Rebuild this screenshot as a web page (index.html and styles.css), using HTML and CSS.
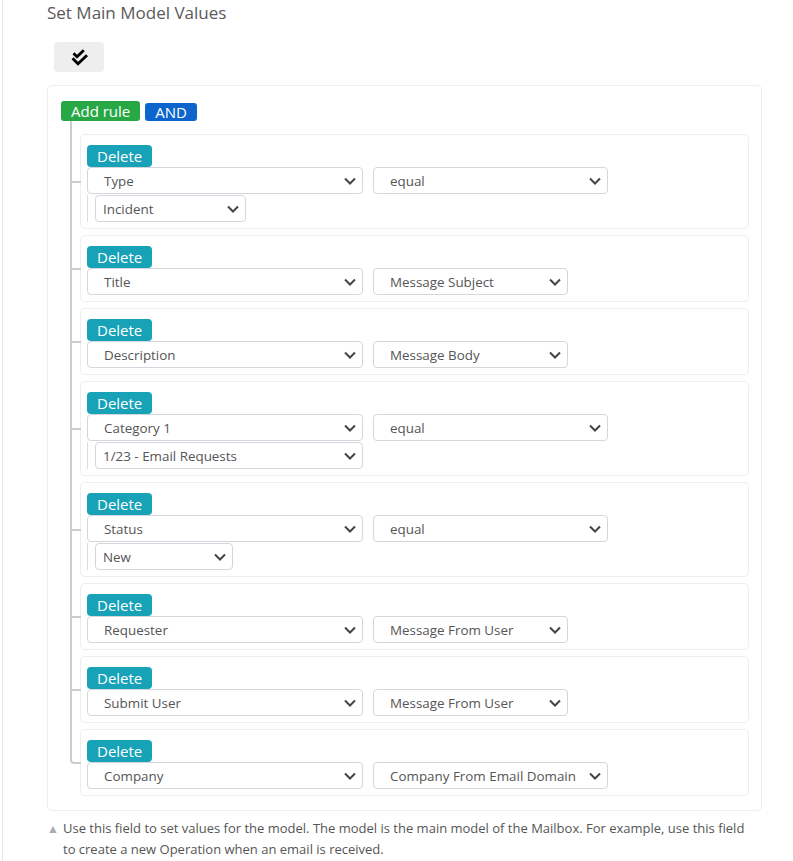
FILE: index.html
```html
<!DOCTYPE html>
<html lang="en">
<head>
    <meta charset="UTF-8">
    <meta name="viewport" content="width=device-width, initial-scale=1.0">
    <title>Set Main Model Values</title>
    <link rel="stylesheet" href="styles.css">
</head>
<body>
    <div class="panel">
        <h3 class="field-title">Set Main Model Values</h3>

        <button type="button" class="toggle-btn" title="Validate">
            <svg width="17" height="17" viewBox="0 0 17 17">
                <path d="M2.5 4.2L6 7.7 12.8 1.2M1.5 9.2l5.5 5.6 9-8.6" fill="none" stroke="#000" stroke-width="2.8"/>
            </svg>
        </button>

        <div class="query-builder">
            <div class="group-header">
                <button type="button" class="btn btn-add">Add rule</button>
                <button type="button" class="btn btn-and">AND</button>
            </div>

            <ul class="rules-list">
                <li class="rule">
                    <button type="button" class="btn btn-delete">Delete</button>
                    <div class="rule-fields">
                        <div class="select sel-field"><span>Type</span><svg class="chevron" width="12" height="8" viewBox="0 0 12 8"><path d="M1 1.5l5 5 5-5" /></svg></div>
                        <div class="select sel-op"><span>equal</span><svg class="chevron" width="12" height="8" viewBox="0 0 12 8"><path d="M1 1.5l5 5 5-5" /></svg></div>
                    </div>
                    <div class="rule-value">
                        <div class="select sel-short"><span>Incident</span><svg class="chevron" width="12" height="8" viewBox="0 0 12 8"><path d="M1 1.5l5 5 5-5" /></svg></div>
                    </div>
                </li>
                <li class="rule">
                    <button type="button" class="btn btn-delete">Delete</button>
                    <div class="rule-fields">
                        <div class="select sel-field"><span>Title</span><svg class="chevron" width="12" height="8" viewBox="0 0 12 8"><path d="M1 1.5l5 5 5-5" /></svg></div>
                        <div class="select sel-val"><span>Message Subject</span><svg class="chevron" width="12" height="8" viewBox="0 0 12 8"><path d="M1 1.5l5 5 5-5" /></svg></div>
                    </div>
                </li>
                <li class="rule">
                    <button type="button" class="btn btn-delete">Delete</button>
                    <div class="rule-fields">
                        <div class="select sel-field"><span>Description</span><svg class="chevron" width="12" height="8" viewBox="0 0 12 8"><path d="M1 1.5l5 5 5-5" /></svg></div>
                        <div class="select sel-val"><span>Message Body</span><svg class="chevron" width="12" height="8" viewBox="0 0 12 8"><path d="M1 1.5l5 5 5-5" /></svg></div>
                    </div>
                </li>
                <li class="rule">
                    <button type="button" class="btn btn-delete">Delete</button>
                    <div class="rule-fields">
                        <div class="select sel-field"><span>Category 1</span><svg class="chevron" width="12" height="8" viewBox="0 0 12 8"><path d="M1 1.5l5 5 5-5" /></svg></div>
                        <div class="select sel-op"><span>equal</span><svg class="chevron" width="12" height="8" viewBox="0 0 12 8"><path d="M1 1.5l5 5 5-5" /></svg></div>
                    </div>
                    <div class="rule-value">
                        <div class="select sel-wide"><span>1/23 - Email Requests</span><svg class="chevron" width="12" height="8" viewBox="0 0 12 8"><path d="M1 1.5l5 5 5-5" /></svg></div>
                    </div>
                </li>
                <li class="rule">
                    <button type="button" class="btn btn-delete">Delete</button>
                    <div class="rule-fields">
                        <div class="select sel-field"><span>Status</span><svg class="chevron" width="12" height="8" viewBox="0 0 12 8"><path d="M1 1.5l5 5 5-5" /></svg></div>
                        <div class="select sel-op"><span>equal</span><svg class="chevron" width="12" height="8" viewBox="0 0 12 8"><path d="M1 1.5l5 5 5-5" /></svg></div>
                    </div>
                    <div class="rule-value">
                        <div class="select sel-tiny"><span>New</span><svg class="chevron" width="12" height="8" viewBox="0 0 12 8"><path d="M1 1.5l5 5 5-5" /></svg></div>
                    </div>
                </li>
                <li class="rule">
                    <button type="button" class="btn btn-delete">Delete</button>
                    <div class="rule-fields">
                        <div class="select sel-field"><span>Requester</span><svg class="chevron" width="12" height="8" viewBox="0 0 12 8"><path d="M1 1.5l5 5 5-5" /></svg></div>
                        <div class="select sel-val"><span>Message From User</span><svg class="chevron" width="12" height="8" viewBox="0 0 12 8"><path d="M1 1.5l5 5 5-5" /></svg></div>
                    </div>
                </li>
                <li class="rule">
                    <button type="button" class="btn btn-delete">Delete</button>
                    <div class="rule-fields">
                        <div class="select sel-field"><span>Submit User</span><svg class="chevron" width="12" height="8" viewBox="0 0 12 8"><path d="M1 1.5l5 5 5-5" /></svg></div>
                        <div class="select sel-val"><span>Message From User</span><svg class="chevron" width="12" height="8" viewBox="0 0 12 8"><path d="M1 1.5l5 5 5-5" /></svg></div>
                    </div>
                </li>
                <li class="rule">
                    <button type="button" class="btn btn-delete">Delete</button>
                    <div class="rule-fields">
                        <div class="select sel-field"><span>Company</span><svg class="chevron" width="12" height="8" viewBox="0 0 12 8"><path d="M1 1.5l5 5 5-5" /></svg></div>
                        <div class="select sel-op"><span>Company From Email Domain</span><svg class="chevron" width="12" height="8" viewBox="0 0 12 8"><path d="M1 1.5l5 5 5-5" /></svg></div>
                    </div>
                </li>
            </ul>
        </div>

        <div class="help-text">
            <span class="help-icon">&#9650;</span>
            <p>Use this field to set values for the model. The model is the main model of the Mailbox. For example, use this field to create a new Operation when an email is received.</p>
        </div>
    </div>
</body>
</html>
```

FILE: styles.css
```css
body {
    margin: 0;
    font-family: "Open Sans", "Noto Sans", sans-serif;
    color: #555;
    background-color: #fff;
}
.panel {
    margin-left: 2px;
    min-height: 100vh;
    border-left: 1px solid #e6e6e6;
    padding: 0 31px 0 44px;
    box-sizing: border-box;
}
.field-title {
    margin: 0;
    padding-top: 1px;
    font-size: 17px;
    font-weight: normal;
    line-height: 24px;
    color: #5a5a5a;
}
.toggle-btn {
    display: flex;
    align-items: center;
    justify-content: center;
    width: 50px;
    height: 30px;
    margin: 17px 0 13px 7px;
    padding: 0;
    border: none;
    border-radius: 4px;
    background-color: #eeeeee;
    cursor: pointer;
}
.query-builder {
    border: 1px solid #eee;
    border-radius: 5px;
    padding: 15px 12px 14px 13px;
}
.group-header {
    display: flex;
    gap: 5px;
}
.btn {
    border: none;
    border-radius: 3px;
    color: #fff;
    font-family: inherit;
    font-size: 15px;
    cursor: pointer;
    padding: 0 10px;
}
.btn-add {
    background-color: #28a745;
    height: 20px;
    line-height: 20px;
}
.btn-and {
    background-color: #0d64cc;
    height: 18px;
    line-height: 18px;
    margin-top: 2px;
}
.btn-delete {
    display: block;
    background-color: #17a2b8;
    height: 22px;
    line-height: 22px;
    border-radius: 4px;
}
.rules-list {
    list-style: none;
    margin: 13px 0 0;
    padding: 0 0 0 19px;
}
.rule {
    position: relative;
    border: 1px solid #eee;
    border-radius: 5px;
    padding: 10px 6px 6px;
    margin-bottom: 6px;
}
.rule:last-child {
    margin-bottom: 0;
}
/* tree connectors */
.rule::before,
.rule::after {
    content: '';
    position: absolute;
    left: -11px;
    width: 9px;
    border-color: #ccc;
    border-style: solid;
}
.rule::before {
    top: -8px;
    height: calc(50% + 7px);
    border-width: 0 0 2px 2px;
}
.rule::after {
    top: 50%;
    height: calc(50% + 8px);
    border-width: 0 0 0 2px;
}
.rule:first-child::before {
    top: -14px;
    height: calc(50% + 13px);
}
.rule:last-child::before {
    border-radius: 0 0 0 4px;
}
.rule:last-child::after {
    display: none;
}
.rule-fields {
    display: flex;
    gap: 10px;
}
.rule-value {
    margin-top: 1px;
    padding-left: 7px;
    border-left: 1px solid #ddd;
}
.select {
    display: flex;
    align-items: center;
    justify-content: space-between;
    height: 27px;
    box-sizing: border-box;
    border: 1px solid #d3d7dc;
    border-radius: 4px;
    padding: 0 6px 0 16px;
    font-size: 13.4px;
    color: #555;
    background-color: #fff;
}
.chevron {
    flex: none;
}
.chevron path {
    fill: none;
    stroke: #444;
    stroke-width: 2;
}
.sel-field { width: 276px; }
.sel-op { width: 235px; }
.sel-val { width: 195px; }
.sel-wide { width: 268px; padding-left: 7px; }
.sel-short { width: 151px; padding-left: 7px; }
.sel-tiny { width: 138px; padding-left: 7px; }
.help-text {
    display: flex;
    margin-top: 7px;
    font-size: 13px;
    line-height: 21px;
    color: #555;
}
.help-icon {
    flex: none;
    width: 16px;
    font-size: 12px;
    color: #a8acb0;
}
.help-text p {
    margin: 0;
    max-width: 690px;
}
```
